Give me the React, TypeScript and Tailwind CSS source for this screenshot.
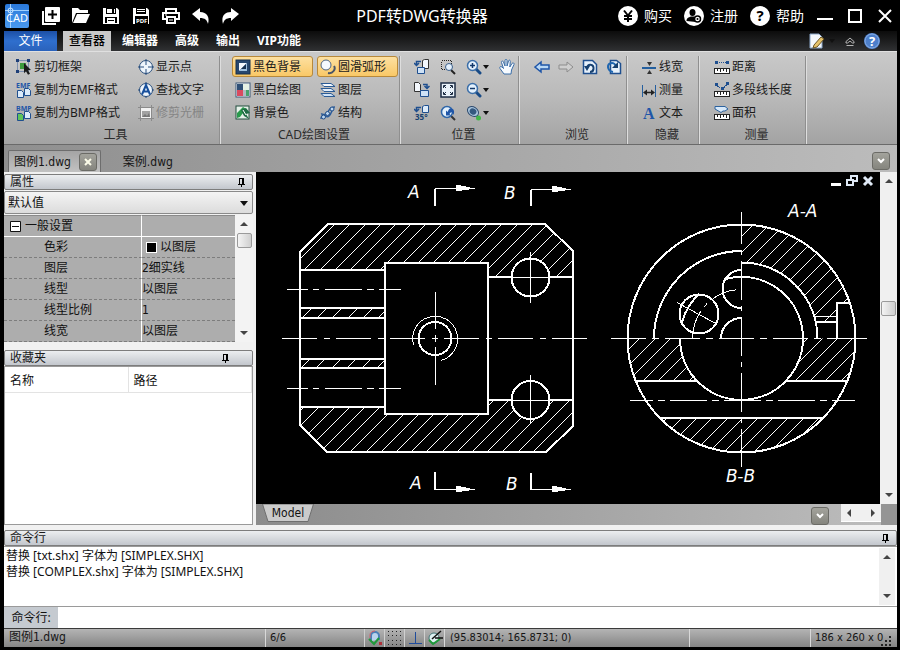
/**
 * CAD viewer window
 * Title bar, ribbon, property panels, drawing canvas, command line and status bar
 */

import { useState, ReactNode } from 'react';

const UI_FONT = "font-['Noto_Sans','Noto_Sans_CJK_SC',sans-serif]";
const TAHOMA_FONT = "font-['DejaVu_Sans_Condensed','Noto_Sans','Noto_Sans_CJK_SC',sans-serif]";

/* ---------- small building blocks ---------- */

function Icon({ children, size = 16, crisp = false }: { children: ReactNode; size?: number; crisp?: boolean }) {
  return (
    <svg
      width={size}
      height={size}
      viewBox={`0 0 ${size} ${size}`}
      fill="none"
      shapeRendering={crisp ? 'crispEdges' : undefined}
      className="shrink-0"
      aria-hidden="true"
    >
      {children}
    </svg>
  );
}

function Page({ x, y, fill = '#dcebfa' }: { x: number; y: number; fill?: string }) {
  return <path d={`M${x} ${y}h4l2 2v5h-6z`} fill={fill} stroke="#1f4f8f" />;
}

function Ruler() {
  return (
    <>
      <rect x=".5" y="9.5" width="15" height="5" fill="#fff" stroke="#222" />
      <path d="M3.5 10v2M6.5 10v3M9.5 10v2M12.5 10v3" stroke="#222" />
    </>
  );
}

function Magnifier({ sign }: { sign?: ReactNode }) {
  return (
    <Icon>
      <path d="M10 10l4 4" stroke="#174a86" strokeWidth="3" strokeLinecap="round" />
      <circle cx="6.5" cy="6.5" r="5" fill="#e4f1fd" stroke="#3b6ea8" strokeWidth="1.5" />
      {sign}
    </Icon>
  );
}

function Caret() {
  return (
    <svg width="6" height="4" viewBox="0 0 6 4" className="shrink-0" aria-hidden="true">
      <path d="M0 0h6L3 4z" fill="#111" />
    </svg>
  );
}

function Pin() {
  return (
    <svg width="7" height="9" viewBox="0 0 7 9" fill="none" shapeRendering="crispEdges" aria-hidden="true">
      <path d="M1.5 6V.5h4V6M0 6.5h7M3.5 6v3M4.5 1v5" stroke="#000" />
    </svg>
  );
}

function Arrow({ dir }: { dir: 'up' | 'down' | 'left' | 'right' }) {
  const paths = {
    up: 'M0 6h8L4 2z',
    down: 'M0 2h8L4 6z',
    left: 'M6 0v8L2 4z',
    right: 'M2 0v8l4-4z',
  };
  return (
    <svg width="8" height="8" viewBox="0 0 8 8" className="shrink-0" aria-hidden="true">
      <path d={paths[dir]} fill="#444" />
    </svg>
  );
}

/* ---------- ribbon icons ---------- */

const icons = {
  cutFrame: (
    <Icon>
      <rect x="1.5" y="1.5" width="11" height="11" stroke="#3a5f9a" strokeDasharray="1 1" />
      <path d="M0 0h3v3H0zM11 0h3v3h-3zM0 11h3v3H0z" fill="#1e3f78" />
      <rect x="4" y="4" width="6" height="6" fill="#3d9b3d" />
      <path d="M8 4l7 7-3 .3 2 3.5-2 1-2-3.6-2 2z" fill="#1b1b1b" />
    </Icon>
  ),
  emf: (
    <Icon>
      <text x="0" y="6" fontSize="7" fontWeight="700" fill="#1f56a8">EMF</text>
      <Page x={8.5} y={6.5} />
      <Page x={1.5} y={8.5} />
    </Icon>
  ),
  bmp: (
    <Icon>
      <text x="0" y="6" fontSize="7" fontWeight="700" fill="#1f56a8">BMP</text>
      <Page x={8.5} y={6.5} />
      <Page x={1.5} y={8.5} fill="#5fc45a" />
    </Icon>
  ),
  showPoint: (
    <Icon>
      <circle cx="8" cy="8" r="6.5" fill="#eef5fc" stroke="#274d7c" />
      <path d="M8 0v6M8 10v6M0 8h6M10 8h6" stroke="#274d7c" />
    </Icon>
  ),
  findText: (
    <Icon>
      <circle cx="8" cy="8" r="6.5" fill="#eef5fc" stroke="#274d7c" />
      <path d="M8 0v2M8 14v2M0 8h2M14 8h2" stroke="#274d7c" />
      <path d="M4 12.5L8 3l4 9.5M5.5 9.5h5" stroke="#174f9c" strokeWidth="2" />
    </Icon>
  ),
  trimRaster: (
    <Icon>
      <path d="M2.5 0v16M13.5 0v16M0 2.5h16M0 13.5h16" stroke="#8b8b8b" />
      <rect x="3" y="3" width="10" height="10" fill="#f2f2f2" />
      <path d="M4 6h8v6H4z" fill="#a2a2a2" />
      <path d="M4 12l3-3 2 2 2-3 1 4z" fill="#777" />
    </Icon>
  ),
  blackBg: (
    <Icon>
      <rect x="1" y="1" width="14" height="14" fill="#27476e" stroke="#16304f" />
      <path d="M4 4h8L4 12z" fill="#f4f8fc" />
      <path d="M12 4v8H4z" fill="#9fc0de" />
      <path d="M6 10L11 5v5z" fill="#16304f" />
    </Icon>
  ),
  bwDraw: (
    <Icon>
      <rect x="1" y="1" width="14" height="14" fill="#fff" stroke="#3c5878" />
      <rect x="2" y="2" width="6" height="6" fill="#2f4f76" />
      <rect x="8" y="8" width="6" height="6" fill="#b3b9c2" />
      <rect x="2" y="8" width="6" height="6" fill="#d94a5f" />
      <rect x="8" y="2" width="6" height="6" fill="#e6f2e6" />
      <rect x="11" y="8" width="3" height="6" fill="#47a36b" />
    </Icon>
  ),
  bgColor: (
    <Icon>
      <rect x="1" y="1" width="13" height="13" fill="#e7f1ea" stroke="#234e3f" />
      <path d="M2 13V8l6-6 3 2-6 8z" fill="#2a9a4c" />
      <path d="M6 5l5-2 4 5-4 1 3 5-5-3z" fill="#1f6c44" />
      <path d="M8 5l3 5" stroke="#fff" />
    </Icon>
  ),
  smoothArc: (
    <Icon>
      <path d="M14 7c2 3-1 8-6 7" stroke="#4a5568" strokeWidth="2" />
      <circle cx="6" cy="6" r="5" fill="#f5f9fe" stroke="#4d6483" />
    </Icon>
  ),
  layers: (
    <Icon>
      <path d="M1 11.5h10l4 3H4z" fill="#cfe2f6" stroke="#2c5c96" />
      <path d="M1 6.5h10l4 3H4z" fill="#e4f0fc" stroke="#2c5c96" />
      <path d="M1 1.5h10l4 3H4z" fill="#f5faff" stroke="#2c5c96" />
    </Icon>
  ),
  structure: (
    <Icon>
      <path d="M1 14c0-5 4-4 6-6s2-6 8-6M1 9c4-1 5 5 8 2s2-5 5-9" stroke="#2b5c9b" strokeWidth="1.5" />
      <circle cx="3.5" cy="12" r="2" fill="#bcd7f2" stroke="#1f4c86" />
      <circle cx="7.5" cy="8.5" r="2" fill="#bcd7f2" stroke="#1f4c86" />
      <circle cx="12" cy="4" r="2" fill="#bcd7f2" stroke="#1f4c86" />
    </Icon>
  ),
  rotateLeft: (
    <Icon>
      <path d="M8.5 1.5l2-1h4v9h-6z" fill="#f4f8fd" stroke="#333" />
      <path d="M7 2.500H2.500V5M0 4l2.500 2.500L5 4" stroke="#1f4f8f" strokeWidth="1.5" />
      <path d="M3.500 8.500h7v6h-7z" fill="#cfe2f6" stroke="#1f4f8f" />
    </Icon>
  ),
  rotateRight: (
    <Icon>
      <path d="M.5.5h4l2 2v7h-6z" fill="#f4f8fd" stroke="#333" />
      <path d="M9 2.500h4V5M10.500 4l2.500 2.500L15.500 4" stroke="#1f4f8f" strokeWidth="1.5" />
      <path d="M6.500 8.500h8v6h-8z" fill="#cfe2f6" stroke="#1f4f8f" />
    </Icon>
  ),
  rotate35: (
    <Icon>
      <path d="M8.500 1.500l2-1h4v7h-6z" fill="#dcebfa" stroke="#1f4f8f" />
      <path d="M7 2.500H2.500V5M0 4l2.500 2.500L5 4" stroke="#1f4f8f" strokeWidth="1.5" />
      <text x="1" y="15" fontSize="8" fontWeight="700" fill="#17406f">35°</text>
    </Icon>
  ),
  zoomWindow: (
    <Icon crisp>
      <rect x="1.5" y="1.5" width="10" height="9" stroke="#222" strokeDasharray="1 1" />
      <g shapeRendering="auto">
        <path d="M11 11l4 4" stroke="#222" strokeWidth="2" />
        <circle cx="9" cy="8" r="3.5" fill="#e4f1fd" stroke="#3b5f8a" />
      </g>
    </Icon>
  ),
  fit: (
    <Icon>
      <rect x="1" y="1" width="14" height="14" fill="#e9f2fa" stroke="#1d2d44" strokeWidth="1.5" />
      <path d="M3.500 6V3.500H6M10 3.500h2.500V6M12.500 10v2.500H10M6 12.500H3.500V10M4 4l2 2M12 4l-2 2M12 12l-2-2M4 12l2-2" stroke="#1d2d44" />
    </Icon>
  ),
  zoomBack: (
    <Icon>
      <path d="M10 10l5 5" stroke="#333" strokeWidth="2" />
      <circle cx="7" cy="7" r="5.5" fill="#e4f1fd" stroke="#2f66a8" strokeWidth="1.5" />
      <path d="M6 5.5v5h5L9.500 9c1.500-3 3.500-2 4 1 1.500-4 0-7-3-6.500-1.500.2-2 1.500-3 3.500z" fill="#1f56a8" />
    </Icon>
  ),
  zoomIn: <Magnifier sign={<path d="M4 6.500h5M6.500 4v5" stroke="#12386b" strokeWidth="1.5" />} />,
  zoomOut: <Magnifier sign={<path d="M4 6.500h5" stroke="#12386b" strokeWidth="1.5" />} />,
  zoomExtents: (
    <Icon>
      <path d="M10 10l4 4" stroke="#444" strokeWidth="2" />
      <ellipse cx="7" cy="6.5" rx="6" ry="4.5" transform="rotate(35 7 6.5)" fill="#a9c5de" stroke="#2d4a6d" />
      <ellipse cx="7" cy="6.5" rx="3.500" ry="3" transform="rotate(35 7 6.5)" fill="#35597f" />
      <circle cx="12.5" cy="13" r="2.500" fill="#43b649" />
    </Icon>
  ),
  hand: (
    <Icon>
      <path
        d="M5 15L1 9.500C0 8 1.500 7 3 8l1.500 1.500L2.500 3.500C2 2 4 1.500 4.500 3L6 7V1.500C6 0 8 0 8 1.500V7l1.500-5c.5-1.500 2-1 1.800.5L10.800 8 13 4.500c1-1.300 2.500-.3 2 1L12.500 11l-.5 4z"
        fill="#f7fbff"
        stroke="#3b6ea8"
      />
    </Icon>
  ),
  back: (
    <Icon>
      <path d="M1 8l6-5v3h8v4H7v3z" fill="#b9d8f5" stroke="#1f56a8" strokeWidth="1.5" />
    </Icon>
  ),
  forward: (
    <Icon>
      <path d="M15 8L9 3v3H1v4h8v3z" fill="#cfcfcf" stroke="#8d8d8d" />
    </Icon>
  ),
  undoView: (
    <Icon>
      <path d="M1.500 1.500h9l4 4v9h-13z" fill="#e7f1fb" stroke="#1f4f8f" strokeWidth="1.5" />
      <path d="M5 9.500C5 4 12 5 11.500 10c-.3 2-2 3-3.500 3" stroke="#17406f" strokeWidth="2" />
      <path d="M2 7h6l-3 5z" fill="#17406f" />
    </Icon>
  ),
  redoView: (
    <Icon>
      <path d="M4.500 1.500h6l4 3v10h-10z" fill="#e7f1fb" stroke="#1f4f8f" strokeWidth="1.5" />
      <path d="M7 13C1 12 0 4 6 4c2 0 3 1 4 3" stroke="#1f66b0" strokeWidth="2" />
      <path d="M6 9h6V3z" fill="#17406f" />
    </Icon>
  ),
  lineWidth: (
    <Icon>
      <path d="M1 9h14" stroke="#245f9f" strokeWidth="2" />
      <path d="M6 3h5L8.500 7zM8.500 11l2.500 4H6z" fill="#333" />
    </Icon>
  ),
  dimension: (
    <Icon>
      <path d="M1.500 3v12M14.500 3v12" stroke="#245f9f" />
      <path d="M4 10.500h8" stroke="#222" strokeWidth="1.5" />
      <path d="M2 10.500l4-3v6zM14 10.500l-4-3v6z" fill="#222" />
    </Icon>
  ),
  text: (
    <Icon>
      <text x="2" y="14" fontSize="16" fontWeight="700" fontFamily="Liberation Serif, serif" fill="#1f56a8">A</text>
    </Icon>
  ),
  distance: (
    <Icon crisp>
      <path d="M3 3.500h10" stroke="#1f4f8f" strokeDasharray="1 1" />
      <path d="M1 2h3v3H1zM12 2h3v3h-3z" fill="#1f4f8f" />
      <Ruler />
    </Icon>
  ),
  polyline: (
    <Icon crisp>
      <path d="M2 3l6 4 6-5" stroke="#1f4f8f" strokeDasharray="1 1" />
      <path d="M1 1h3v3H1zM12 0h3v3h-3zM7 5h3v3H7z" fill="#1f4f8f" />
      <Ruler />
    </Icon>
  ),
  area: (
    <Icon>
      <path d="M1 1.500h10l3 2.500-3 2H9L7 7.500 1 4z" fill="#d7e9fa" stroke="#2d639f" />
      <Ruler />
    </Icon>
  ),
};

/* ---------- title bar ---------- */

const quickActions = [
  {
    label: '新建',
    icon: (
      <Icon size={18}>
        <path d="M1 4v13h13" stroke="#fff" strokeWidth="2" />
        <rect x="3" y="0" width="15" height="15" rx="1" fill="#fff" />
        <path d="M10.500 3v9M6 7.500h9" stroke="#000" strokeWidth="2" />
      </Icon>
    ),
  },
  {
    label: '打开',
    icon: (
      <Icon size={18}>
        <path d="M0 16V1h6l2 2h8v3H4z" fill="#fff" />
        <path d="M5 7h13l-4 9H1z" fill="#fff" />
      </Icon>
    ),
  },
  {
    label: '保存',
    icon: (
      <Icon size={18}>
        <path d="M1 1h14l2 2v14H1z" fill="#fff" />
        <path d="M4 1h10v6H4zM3 10h12v6H3z" fill="#000" />
        <path d="M5 2h8v4H5z" fill="#fff" />
        <path d="M11 2v4" stroke="#000" strokeWidth="2" />
        <path d="M5 11h8v5H5z" fill="#fff" />
        <path d="M6 13.500h6" stroke="#000" />
      </Icon>
    ),
  },
  {
    label: '保存为PDF',
    icon: (
      <Icon size={18}>
        <path d="M1 1h14l2 2v14H1z" fill="#fff" />
        <path d="M4 1h10v6H4z" fill="#000" />
        <path d="M5 2h8v1H5zM5 4h8v1H5z" fill="#fff" />
        <rect x="3" y="9" width="13" height="8" fill="#000" />
        <text x="4" y="16" fontSize="6" fontWeight="700" fill="#fff">PDF</text>
      </Icon>
    ),
  },
  {
    label: '打印',
    icon: (
      <Icon size={18}>
        <path d="M4 5V2h10v3" stroke="#fff" strokeWidth="2" />
        <path d="M4 12H1V6h16v6h-3" stroke="#fff" strokeWidth="2" />
        <path d="M5 10h8v6H5z" stroke="#fff" strokeWidth="2" />
        <path d="M3 8h2M7 13h4" stroke="#fff" />
      </Icon>
    ),
  },
  {
    label: '撤销',
    icon: (
      <Icon size={18}>
        <path d="M0 7l8-6v4c7 0 10 5 8 12-1-4-3-6-8-6v3z" fill="#fff" />
      </Icon>
    ),
  },
  {
    label: '重做',
    icon: (
      <Icon size={18}>
        <path d="M17 7L9 1v4C2 5-1 10 1 17c1-4 3-6 8-6v3z" fill="#fff" />
      </Icon>
    ),
  },
];

const accountActions = [
  {
    label: '购买',
    icon: (
      <path d="M6 4.500l4 5 4-5M10 9.500V16M6 10h8M6 13h8" stroke="#000" strokeWidth="2" />
    ),
  },
  {
    label: '注册',
    icon: (
      <>
        <ellipse cx="8.5" cy="6.5" rx="3" ry="3.5" fill="#000" />
        <path d="M2.500 15c0-3 2-3.500 4.500-4.500h3.500L12 16z" fill="#000" />
        <circle cx="13.5" cy="13" r="3" fill="#fff" stroke="#000" strokeWidth="1.5" />
        <circle cx="13.5" cy="13" r="1" fill="#000" />
      </>
    ),
  },
  {
    label: '帮助',
    icon: (
      <text x="10" y="15" fontSize="15" fontWeight="700" textAnchor="middle" fill="#000">?</text>
    ),
  },
];

function TitleBar() {
  return (
    <header className="flex h-[31px] items-center bg-black pl-[5px] text-white">
      <svg width="24" height="24" viewBox="0 0 24 24" className="mr-[7px] shrink-0" aria-hidden="true">
        <defs>
          <linearGradient id="logo" x1="0" y1="0" x2="0" y2="1">
            <stop offset="0" stopColor="#2a78d8" />
            <stop offset="1" stopColor="#4a9af0" />
          </linearGradient>
        </defs>
        <rect width="24" height="24" rx="2" fill="url(#logo)" />
        <path d="M5.500 0v24M0 6.500h24" stroke="#9fd0ff" />
        <circle cx="5.5" cy="6.5" r="2.5" fill="none" stroke="#cfe8ff" />
        <text x="12" y="18" fontSize="11" textAnchor="middle" fill="#fff">CAD</text>
      </svg>
      {quickActions.map((action) => (
        <button key={action.label} type="button" aria-label={action.label} className="flex w-[30px] justify-center">
          {action.icon}
        </button>
      ))}
      <h1 className="flex-1 pr-5 text-center text-base">PDF转DWG转换器</h1>
      <div className="flex gap-3 pr-[13px]">
        {accountActions.map((action) => (
          <button key={action.label} type="button" className="flex items-center gap-[6px] text-sm">
            <Icon size={20}>
              <circle cx="10" cy="10" r="10" fill="#fff" />
              {action.icon}
            </Icon>
            {action.label}
          </button>
        ))}
      </div>
      <div className="flex gap-[14px] pr-[7px]">
        <button type="button" aria-label="最小化">
          <Icon>
            <path d="M0 11h16" stroke="#fff" strokeWidth="2" />
          </Icon>
        </button>
        <button type="button" aria-label="最大化">
          <Icon>
            <rect x="2" y="2" width="12" height="12" stroke="#fff" strokeWidth="2" />
          </Icon>
        </button>
        <button type="button" aria-label="关闭">
          <Icon>
            <path d="M2 2l12 12M14 2L2 14" stroke="#fff" strokeWidth="2" />
          </Icon>
        </button>
      </div>
    </header>
  );
}

/* ---------- ribbon ---------- */

const ribbonTabs = ['查看器', '编辑器', '高级', '输出', 'VIP功能'];

function RibbonTabs() {
  const [active, setActive] = useState('查看器');

  return (
    <nav className="flex h-5 items-stretch gap-[5px] bg-linear-to-b from-[#0c0c0c] to-[#303133] text-xs font-bold text-white">
      <button
        type="button"
        className="mr-px w-[53px] bg-linear-to-b from-[#1c4fa5] via-[#2f6fce] to-[#2a62bb] font-normal"
      >
        文件
      </button>
      {ribbonTabs.map((tab) => (
        <button
          key={tab}
          type="button"
          onClick={() => setActive(tab)}
          className={tab === active ? 'bg-[#c9c9c9] px-[6px] font-medium text-black' : 'px-[6px]'}
        >
          {tab}
        </button>
      ))}
      <div className="ml-auto flex items-center pr-[17px]">
        <button type="button" aria-label="样式" className="mr-[10px] flex items-center gap-1">
          <Icon>
            <path d="M1 1h9l3 3v11H1z" fill="#f4f8fc" stroke="#8aa6c8" />
            <path d="M5 12l7-8 3 2-7 8-4 1z" fill="#e5c26a" stroke="#6b5524" />
          </Icon>
          <Caret />
        </button>
        <button type="button" aria-label="折叠功能区" className="mr-[9px]">
          <svg width="10" height="9" viewBox="0 0 10 9" fill="none" aria-hidden="true">
            <path d="M1 4.500L5 1l4 3.500v1.500H7.500L5 4 2.500 6H1zM1.500 8.500h7" stroke="#b5b5b5" />
          </svg>
        </button>
        <button type="button" aria-label="帮助主题">
          <Icon>
            <circle cx="8" cy="8" r="8" fill="#4d7fca" />
            <circle cx="8" cy="8" r="7" stroke="#87aee6" />
            <text x="8" y="13" fontSize="13" fontWeight="700" textAnchor="middle" fill="#fff">?</text>
          </Icon>
        </button>
      </div>
    </nav>
  );
}

function Tool({ icon, label, active, disabled }: { icon: ReactNode; label: string; active?: boolean; disabled?: boolean }) {
  const look = active
    ? 'border-[#b8893a] bg-linear-to-b from-[#fde0a0] to-[#f9c866]'
    : 'border-transparent';
  return (
    <button
      type="button"
      disabled={disabled}
      className={`flex h-[21px] items-center gap-[2px] whitespace-nowrap rounded-[3px] border px-[2px] text-[#1a1a1a] disabled:text-[#858585] ${look}`}
    >
      {icon}
      {label}
    </button>
  );
}

function IconTool({ icon, label, menu }: { icon: ReactNode; label: string; menu?: boolean }) {
  return (
    <button type="button" aria-label={label} className="flex h-[21px] items-center gap-px px-[3px]">
      {icon}
      {menu && <Caret />}
    </button>
  );
}

function Group({ title, className, children }: { title: string; className: string; children: ReactNode }) {
  return (
    <section className="flex flex-col border-r border-[#dedede] shadow-[inset_-1px_0_#8f8f8f]">
      <div className={`flex flex-1 items-start ${className}`}>{children}</div>
      <h2 className="h-[18px] pl-[7px] text-center leading-[18px] text-[#2b2b2b]">{title}</h2>
    </section>
  );
}

function Column({ children }: { children: ReactNode }) {
  return <div className="flex flex-col gap-[2px]">{children}</div>;
}

function Ribbon() {
  return (
    <div className="flex h-[94px] border-y border-t-[#e0e0e0] border-b-[#6a6a6a] bg-linear-to-b from-[#c9c9c9] via-[#b9b9b9] to-[#a3a3a3] pt-1 text-xs">
      <Group title="工具" className="gap-3 pl-[9px] pr-[13px]">
        <Column>
          <Tool icon={icons.cutFrame} label="剪切框架" />
          <Tool icon={icons.emf} label="复制为EMF格式" />
          <Tool icon={icons.bmp} label="复制为BMP格式" />
        </Column>
        <Column>
          <Tool icon={icons.showPoint} label="显示点" />
          <Tool icon={icons.findText} label="查找文字" />
          <Tool icon={icons.trimRaster} label="修剪光栅" disabled />
        </Column>
      </Group>
      <Group title="CAD绘图设置" className="pl-[11px] pr-[2px]">
        <div className="grid grid-cols-[81px_81px] gap-x-1 gap-y-[2px]">
          <Tool icon={icons.blackBg} label="黑色背景" active />
          <Tool icon={icons.smoothArc} label="圆滑弧形" active />
          <Tool icon={icons.bwDraw} label="黑白绘图" />
          <Tool icon={icons.layers} label="图层" />
          <Tool icon={icons.bgColor} label="背景色" />
          <Tool icon={icons.structure} label="结构" />
        </div>
      </Group>
      <Group title="位置" className="gap-1 pl-[10px] pr-px">
        <Column>
          <IconTool icon={icons.rotateLeft} label="向左旋转" />
          <IconTool icon={icons.rotateRight} label="向右旋转" />
          <IconTool icon={icons.rotate35} label="旋转35°" />
        </Column>
        <Column>
          <IconTool icon={icons.zoomWindow} label="窗口缩放" />
          <IconTool icon={icons.fit} label="适合窗口" />
          <IconTool icon={icons.zoomBack} label="上一视图" />
        </Column>
        <Column>
          <IconTool icon={icons.zoomIn} label="放大" menu />
          <IconTool icon={icons.zoomOut} label="缩小" menu />
          <IconTool icon={icons.zoomExtents} label="缩放范围" menu />
        </Column>
        <IconTool icon={icons.hand} label="平移" />
      </Group>
      <Group title="浏览" className="gap-[2px] pl-[11px] pr-[2px]">
        <IconTool icon={icons.back} label="后退" />
        <IconTool icon={icons.forward} label="前进" />
        <IconTool icon={icons.undoView} label="上一个" />
        <IconTool icon={icons.redoView} label="下一个" />
      </Group>
      <Group title="隐藏" className="pl-[10px] pr-[13px]">
        <Column>
          <Tool icon={icons.lineWidth} label="线宽" />
          <Tool icon={icons.dimension} label="测量" />
          <Tool icon={icons.text} label="文本" />
        </Column>
      </Group>
      <Group title="测量" className="px-[11px]">
        <Column>
          <Tool icon={icons.distance} label="距离" />
          <Tool icon={icons.polyline} label="多段线长度" />
          <Tool icon={icons.area} label="面积" />
        </Column>
      </Group>
    </div>
  );
}

/* ---------- document tabs ---------- */

function DropButton({ label }: { label: string }) {
  return (
    <button
      type="button"
      aria-label={label}
      className="flex size-[18px] items-center justify-center rounded-[3px] border border-[#6b6b66] bg-linear-to-b from-[#a3a39c] to-[#85857e]"
    >
      <svg width="8" height="6" viewBox="0 0 8 6" fill="none" aria-hidden="true">
        <path d="M1 1l3 3 3-3" stroke="#fff" strokeWidth="2" />
      </svg>
    </button>
  );
}

function DocumentTabs() {
  return (
    <div className={`flex h-[27px] items-end bg-linear-to-r from-[#8f8f8f] to-[#bcbcbc] pl-1 text-xs text-[#151515] ${TAHOMA_FONT}`}>
      <div className="flex h-[22px] items-center gap-2 rounded-t-[2px] border border-b-0 border-[#6d6d6d] bg-linear-to-b from-[#a4a4a4] to-[#c2c2c2] pl-[5px] pr-[3px]">
        <button type="button" className="pt-px">图例1.dwg</button>
        <button
          type="button"
          aria-label="关闭图例1.dwg"
          className="flex size-[18px] items-center justify-center rounded-[3px] border border-[#6b6b66] bg-linear-to-b from-[#a3a39c] to-[#85857e]"
        >
          <svg width="8" height="8" viewBox="0 0 8 8" fill="none" aria-hidden="true">
            <path d="M1 1l6 6M7 1L1 7" stroke="#fbfbe8" strokeWidth="2" />
          </svg>
        </button>
      </div>
      <button type="button" className="ml-[22px] h-[22px] pt-px">案例.dwg</button>
      <div className="ml-auto pb-[2px] pr-[7px]">
        <DropButton label="文档列表" />
      </div>
    </div>
  );
}

/* ---------- left panels ---------- */

function PanelHeader({ title, pinClass }: { title: string; pinClass: string }) {
  return (
    <div className={`flex h-4 shrink-0 items-center justify-between rounded-[2px] border border-[#7d7d7d] bg-linear-to-b from-[#eceef0] to-[#c3c7cd] pl-[5px] text-xs leading-[14px] text-[#1a1a1a] ${pinClass}`}>
      <h2>{title}</h2>
      <button type="button" aria-label={`固定${title}`}>
        <Pin />
      </button>
    </div>
  );
}

const THUMB = 'size-[15px] shrink-0 rounded-[2px] border border-[#9a9a9a] bg-linear-to-r from-[#f4f4f4] to-[#cfcfcf]';

const properties = [
  { name: '色彩', value: '以图层', swatch: true },
  { name: '图层', value: '2细实线' },
  { name: '线型', value: '以图层' },
  { name: '线型比例', value: '1' },
  { name: '线宽', value: '以图层' },
];

function SidePanels() {
  return (
    <aside className="flex w-[252px] shrink-0 flex-col bg-[#f1f1f1] pr-[3px] pt-[2px] text-xs text-[#111]">
      <PanelHeader title="属性" pinClass="pr-[7px]" />
      <div className="relative mt-px">
        <select
          aria-label="选择对象"
          className="block h-[23px] w-full appearance-none rounded-[2px] border border-[#8a8a8a] bg-linear-to-b from-[#f4f4f4] to-[#dcdcdc] pl-[3px]"
        >
          <option>默认值</option>
        </select>
        <svg width="8" height="5" viewBox="0 0 8 5" className="pointer-events-none absolute right-[5px] top-[10px]" aria-hidden="true">
          <path d="M0 0h8L4 5z" fill="#111" />
        </svg>
      </div>
      <div className={`mt-px flex ${TAHOMA_FONT}`}>
        <table className="flex-1 table-fixed border-separate border-spacing-0 bg-[#adadad] text-left">
          <thead>
            <tr>
              <th scope="colgroup" className="h-[22px] w-[138px] border-b border-r border-t border-white border-t-[#8a8a8a] p-0 font-normal">
                <span className="flex items-center gap-1 pl-[6px]">
                  <svg width="11" height="11" viewBox="0 0 11 11" fill="none" aria-hidden="true">
                    <path d="M.5.5h10v10H.5zM2 5.500h7" fill="#fff" stroke="#111" />
                  </svg>
                  一般设置
                </span>
              </th>
              <td className="border-b border-t border-white border-t-[#8a8a8a] p-0" />
            </tr>
          </thead>
          <tbody>
            {properties.map((row) => (
              <tr key={row.name}>
                <th scope="row" className="h-[21px] border-b border-r border-dashed border-b-[#7d7d7d] border-r-white p-0 pl-10 font-normal [border-right-style:solid]">
                  {row.name}
                </th>
                <td className="border-b border-dashed border-[#7d7d7d] p-0">
                  <span className={row.swatch ? 'flex items-center gap-[3px] pl-1' : 'flex items-center'}>
                    {row.swatch && <span className="size-[11px] border border-white bg-black" />}
                    {row.value}
                  </span>
                </td>
              </tr>
            ))}
          </tbody>
        </table>
        <div className="flex w-[18px] flex-col items-center justify-between bg-[#f3f3f3] py-[5px]" aria-hidden="true">
          <div className="flex flex-col items-center gap-[5px]">
            <Arrow dir="up" />
            <div className={THUMB} />
          </div>
          <Arrow dir="down" />
        </div>
      </div>
      <div className="mt-2 flex flex-1 flex-col">
        <PanelHeader title="收藏夹" pinClass="pr-[23px]" />
        <div className="flex-1 border border-[#9a9a9a] bg-white">
          <table className="w-full table-fixed text-left">
            <thead>
              <tr className="h-[25px]">
                <th scope="col" className="w-[123px] border-b border-r border-[#e3e3e3] px-[5px] pt-1 font-normal">名称</th>
                <th scope="col" className="border-b border-r border-[#e3e3e3] px-[5px] pt-1 font-normal">路径</th>
              </tr>
            </thead>
          </table>
        </div>
      </div>
    </aside>
  );
}

/* ---------- drawing ---------- */

// Diagonal hatch lines (x + y = c) cut to a closed region
function Hatch({ id, region, start, from, to }: { id: string; region: string; start: number; from: number; to: number }) {
  const step = 15.2;
  const first = start + Math.ceil((from - start) / step) * step;
  const lines: string[] = [];
  for (let c = first; c < to; c += step) {
    const sum = Math.round(c);
    lines.push(`M${sum - 200} 200L${sum - 480} 480`);
  }
  return (
    <g>
      <clipPath id={id}>
        <path d={region} />
      </clipPath>
      <path d={lines.join('')} clipPath={`url(#${id})`} shapeRendering="auto" />
    </g>
  );
}

function SectionMark({ x, y, foot }: { x: number; y: number; foot: number }) {
  return (
    <>
      <path d={`M${x} ${foot}V${y}`} strokeWidth="2" />
      <path d={`M${x} ${y}h40`} />
      <path d={`M${x + 21} ${y - 4}v7l19-3z`} fill="#fff" stroke="none" />
    </>
  );
}

function Drawing() {
  return (
    <svg viewBox="256 172 624 332" className="block h-full w-full" role="img" aria-label="图例1.dwg">
      <g stroke="#fff" fill="none" shapeRendering="crispEdges">
        {/* Front section hatching */}
        <Hatch id="h1" start={574.3} from={540} to={860} region="M300 252L328 224H545L573 251V277H488V263H385V270H300z" />
        <Hatch id="h2" start={574.3} from={600} to={720} region="M300 308H385V318H300z" />
        <Hatch id="h3" start={578} from={640} to={760} region="M300 359H385V368H300z" />
        <Hatch id="h4" start={574.3} from={700} to={1030} region="M300 407H385V414H488V400H573V426L546 452H327L300 425z" />

        {/* Front section outline */}
        <g strokeWidth="2">
          <path d="M300 252L328 224H545L573 251V426L546 452H327L300 425z" />
          <path d="M385 263H488V414H385z" />
          <path d="M300 270H385M300 308H385M300 318H385M300 359H385M300 368H385M300 407H385M488 277H573M488 400H573" />
          <circle cx="530.5" cy="277.5" r="19" fill="#000" />
          <circle cx="530.5" cy="400" r="19" fill="#000" />
          <circle cx="435" cy="338.5" r="16.5" />
        </g>
        <path d="M413.500 345A22.500 22.500 0 1 1 441 360.500" />
        <path d="M530.500 252V303M511 277.500H550M530.500 375V424M511 400.500H550" />
        <path d="M286.500 289.500H308M313 289.500H319M325 289.500H362M367 289.500H374M379 289.500H401" />
        <path d="M286.500 388.500H308M313 388.500H319M325 388.500H362M367 388.500H374M379 388.500H401" />
        <path d="M282 338.500H589" strokeDasharray="35 7 6 6" />
        <path d="M435.500 292V329M435.500 335V342M435.500 347V385" />

        {/* Section marks */}
        <SectionMark x={435} y={188.5} foot={206} />
        <SectionMark x={531} y={189.5} foot={206} />
        <SectionMark x={435} y={489.5} foot={472} />
        <SectionMark x={531} y={489.5} foot={473} />

        {/* Side section hatching */}
        <Hatch id="h5" start={978.3} from={960} to={1160} region="M741.500 224.500A114 114 0 0 1 850 303H837V322H816A76 76 0 0 0 741.500 262.500z" />
        <Hatch id="h6" start={978.3} from={960} to={1080} region="M627.500 338.500H680A61.500 61.500 0 0 0 697.500 381H635.500A114 114 0 0 1 627.500 338.500z" />
        <Hatch id="h7" start={978.3} from={1130} to={1240} region="M803 338.500H855.500A114 114 0 0 1 847.500 381H786A61.500 61.500 0 0 0 803 338.500z" />
        <Hatch id="h8" start={978.3} from={1080} to={1260} region="M660 418H823A114 114 0 0 1 660 418z" />

        {/* Side section outline */}
        <g strokeWidth="2">
          <circle cx="741.5" cy="338.5" r="114" />
          <path d="M654 338.500A87.500 87.500 0 0 1 741.500 251" />
          <path d="M741.500 262.500A76 76 0 0 1 817.500 338.500" />
          <path d="M680 338.500A61.500 61.500 0 1 0 725.500 279" />
          <path d="M741.500 270A19 19 0 0 0 741.500 308M721 338.500A20.500 20.500 0 0 1 741.500 318" />
          <circle cx="699" cy="314" r="19.5" />
          <path d="M682 322A61.500 61.500 0 0 1 699 294" />
          <path d="M851 303H837V338M815 322H837" />
          <path d="M635 381H697M786 381H848M660 418H824" />
        </g>
        <path d="M692.500 338A49 49 0 0 1 741.500 289.500" strokeDasharray="28 5 5 5" />
        <path d="M677 302.500L717.500 324.500" />
        <path d="M814 316.500H837" />
        <path d="M741.500 212V467" strokeDasharray="39 6 5 6" strokeDashoffset="7" />
        <path d="M611 338.500H828" strokeDasharray="35 6 7 6" />
        <path d="M828 338.500H867" />
        <path d="M630 400.500H855" strokeDasharray="37 5 7 5" strokeDashoffset="14" />
      </g>

      <g fill="#fff" fontSize="17" fontStyle="italic" fontFamily="DejaVu Sans, sans-serif">
        <text x="408" y="198">A</text>
        <text x="504" y="199">B</text>
        <text x="410" y="489">A</text>
        <text x="506" y="490">B</text>
        <text x="788" y="217">A-A</text>
        <text x="726" y="482">B-B</text>
      </g>
    </svg>
  );
}

function Workspace() {
  return (
    <main className="flex min-w-0 flex-1 flex-col">
      <div className="flex min-h-0 flex-1">
        <div className="relative min-w-0 flex-1 bg-black">
          <Drawing />
          <div className="absolute right-[6px] top-[3px] flex gap-1">
            <button type="button" aria-label="最小化图纸">
              <Icon size={12}>
                <path d="M1 8h10v3H1z" fill="#fff" />
              </Icon>
            </button>
            <button type="button" aria-label="还原图纸">
              <Icon size={12} crisp>
                <path d="M5 4V1h6v5H8" stroke="#dfe9f5" strokeWidth="2" />
                <path d="M1 5h6v5H1z" stroke="#dfe9f5" strokeWidth="2" />
              </Icon>
            </button>
            <button type="button" aria-label="关闭图纸">
              <Icon size={12}>
                <path d="M2 2l8 8M10 2l-8 8" stroke="#dfe9f5" strokeWidth="3" />
              </Icon>
            </button>
          </div>
        </div>
        <div className="flex w-[17px] shrink-0 flex-col items-center bg-[#f0f0f0] py-[5px]" aria-hidden="true">
          <Arrow dir="up" />
          <div className="flex-2" />
          <div className={THUMB} />
          <div className="flex-3" />
          <Arrow dir="down" />
        </div>
      </div>
      <div className={`flex h-[21px] items-start bg-linear-to-r from-[#8c8c8c] to-[#bdbdbd] pl-[6px] text-xs text-[#111] ${TAHOMA_FONT}`}>
        <button type="button" className="relative h-[18px] w-[52px]">
          <svg viewBox="0 0 52 18" className="absolute inset-0" aria-hidden="true">
            <path d="M.5 0L6 17.500H46L51.500 0z" fill="#cbcbcb" stroke="#6e6e6e" />
          </svg>
          <span className="relative">Model</span>
        </button>
        <div className="ml-auto pr-3 pt-[3px]">
          <DropButton label="布局列表" />
        </div>
        <div className="flex h-[18px] w-10 items-center justify-between border-b border-white bg-[#f0f0f0] px-1" aria-hidden="true">
          <Arrow dir="left" />
          <Arrow dir="right" />
        </div>
        <div className="h-full w-4 bg-[#949494]" />
      </div>
    </main>
  );
}

/* ---------- command line and status bar ---------- */

function CommandPanel() {
  return (
    <section className="bg-[#f1f1f1] pt-[5px] text-xs text-[#111]">
      <PanelHeader title="命令行" pinClass="pr-[7px]" />
      <div className="flex h-[60px] border-t border-[#9a9a9a] bg-white pr-[2px]">
        <div className="flex-1 pl-[2px] pt-px leading-4">
          <p>替换 [txt.shx] 字体为 [SIMPLEX.SHX]</p>
          <p>替换 [COMPLEX.shx] 字体为 [SIMPLEX.SHX]</p>
        </div>
        <div className="my-px flex w-4 flex-col items-center justify-between bg-[#f0f0f0] py-[5px]" aria-hidden="true">
          <Arrow dir="up" />
          <Arrow dir="down" />
        </div>
      </div>
      <div className="flex h-[22px] border-t border-[#9a9a9a] bg-white">
        <label htmlFor="command" className="flex w-[54px] items-center justify-center bg-[#c5cad0]">
          命令行:
        </label>
        <input id="command" type="text" className="min-w-0 flex-1 px-1 outline-none" />
      </div>
    </section>
  );
}

const snapModes = [
  {
    label: '对象捕捉',
    icon: (
      <Icon>
        <path d="M4 11V6a4 4 0 0 1 8 0v4" fill="#b9d3ee" stroke="#4b7fb8" strokeWidth="2" />
        <path d="M3 8V5a5 4 0 0 1 5-4" stroke="#d35f6b" />
        <path d="M2 9l5 5 5-6" stroke="#1f9a3a" strokeWidth="2" />
        <path d="M12 12h3v3h-3z" fill="#b0303a" />
      </Icon>
    ),
  },
  {
    label: '栅格',
    icon: (
      <Icon crisp>
        <path d="M1 1.500h14M1 5.500h14M1 10.500h14M1 14.500h14" stroke="#222" strokeDasharray="1 3" />
      </Icon>
    ),
  },
  {
    label: '正交',
    icon: (
      <Icon crisp>
        <path d="M8.500 2v11M2 13.500h13" stroke="#1f4c9c" />
      </Icon>
    ),
  },
  {
    label: '极轴',
    icon: (
      <Icon>
        <circle cx="7" cy="8" r="5" fill="#dff1f3" stroke="#477" />
        <path d="M2 10l4 4 7-5" stroke="#1f9a3a" strokeWidth="2" />
        <path d="M5 9L14 1M8 8h8" stroke="#111" strokeWidth="1.5" />
      </Icon>
    ),
  },
];

function StatusBar() {
  return (
    <footer className={`flex h-[19px] items-stretch border-t border-[#3a3a3a] bg-linear-to-b from-[#b4b4b4] to-[#858585] text-xs leading-[17px] text-[#151515] ${TAHOMA_FONT}`}>
      <span className="w-[262px] border-r border-[#d8d8d8] pl-[5px]">图例1.dwg</span>
      <span className="w-[98px] pl-1 text-[11px]">6/6</span>
      {snapModes.map((mode) => (
        <button
          key={mode.label}
          type="button"
          aria-label={mode.label}
          className="flex w-5 items-center justify-center border-l border-[#d0d0d0]"
        >
          {mode.icon}
        </button>
      ))}
      <span className="flex-1 border-x border-[#d8d8d8] pl-[5px] text-[11px]">(95.83014; 165.8731; 0)</span>
      <span className="w-[121px] border-r border-[#d8d8d8]" />
      <span className="w-[86px] whitespace-nowrap pl-1 text-[11px]">186 x 260 x 0</span>
      <svg width="11" height="11" viewBox="0 0 11 11" className="-ml-4 mr-[5px] self-end" shapeRendering="crispEdges" aria-hidden="true">
        <path d="M8 0h2v2H8zM4 4h2v2H4zM8 4h2v2H8zM0 8h2v2H0zM4 8h2v2H4zM8 8h2v2H8z" fill="#222" />
      </svg>
    </footer>
  );
}

export default function App() {
  return (
    <div className={`flex min-h-screen flex-col bg-black pb-[3px] ${UI_FONT}`}>
      <TitleBar />
      <div className="flex flex-1 flex-col pl-1 pr-[3px]">
        <RibbonTabs />
        <Ribbon />
        <DocumentTabs />
        <div className="flex flex-1">
          <SidePanels />
          <Workspace />
        </div>
        <CommandPanel />
        <StatusBar />
      </div>
    </div>
  );
}
